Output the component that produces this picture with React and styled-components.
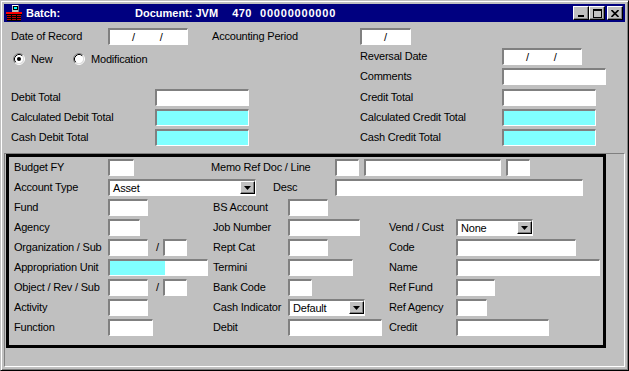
import React from 'react';
import styled, { createGlobalStyle } from 'styled-components';

const Global = createGlobalStyle`
  html, body { margin: 0; padding: 0; background: #c0c0c0; }
  body { font-family: "Liberation Sans", Arial, sans-serif; font-size: 11px; }
  #root { width: 629px; height: 371px; }
`;

const Window = styled.div`
  box-sizing: border-box;
  width: 629px;
  height: 371px;
  background: #c0c0c0;
  border: 1px solid;
  border-color: #c0c0c0 #000 #000 #c0c0c0;
  box-shadow: inset 1px 1px #fff, inset -1px -1px #808080;
  padding: 3px;
  display: flex;
  flex-direction: column;
  font-family: "Liberation Sans", Arial, sans-serif;
  font-size: 11px;
  letter-spacing: -0.2px;
  color: #000;
`;

const TitleBar = styled.div`
  flex: none;
  height: 18px;
  background: #000080;
  color: #fff;
  display: flex;
  align-items: center;
  padding: 0 2px;
  font-weight: bold;
  letter-spacing: 0;
  white-space: pre;
`;

const AppIcon = styled.svg`
  flex: none;
  margin-right: 4px;
`;

const Caption = styled.span`
  width: ${p => p.$w}px;
  flex: none;
`;

const CaptionPart = styled.span`
  margin-left: ${p => p.$ml || 0}px;
  letter-spacing: ${p => p.$ls || 0}px;
`;

const TitleButtons = styled.div`
  margin-left: auto;
  display: flex;
  align-items: center;
`;

const TitleButton = styled.div`
  box-sizing: border-box;
  width: 16px;
  height: 14px;
  margin-left: ${p => p.$ml || 0}px;
  background: #c0c0c0;
  border: 1px solid;
  border-color: #fff #000 #000 #fff;
  box-shadow: inset -1px -1px #808080;
  display: flex;
  align-items: center;
  justify-content: center;
`;

const Upper = styled.div`
  flex: none;
  height: 131px;
  box-sizing: border-box;
  padding: 6px 0 0 7px;
  display: grid;
  grid-template-columns: 97px 47px 57px 148px 142px 1fr;
  grid-template-rows: 20px 20px 21px 20px 20px 20px;
  grid-template-areas:
    "dateL dateF dateF acctL acctF ."
    "radio radio radio . revL revF"
    ". . . . comL comF"
    "debL debL debF . crL crF"
    "cdebL cdebL cdebF . ccrL ccrF"
    "kdebL kdebL kdebF . kcrL kcrF";
  align-content: start;
`;

const Label = styled.div`
  grid-area: ${p => p.$area || 'auto'};
  width: ${p => (p.$w ? `${p.$w}px` : 'auto')};
  margin-left: ${p => p.$ml || 0}px;
  flex: none;
  height: 17px;
  line-height: 17px;
  white-space: nowrap;
  align-self: start;
`;

const TextBox = styled.div`
  grid-area: ${p => p.$area || 'auto'};
  box-sizing: border-box;
  flex: none;
  width: ${p => p.$w}px;
  height: 17px;
  margin-left: ${p => p.$ml || 0}px;
  align-self: start;
  justify-self: start;
  border-style: solid;
  border-width: 2px 1px 1px 2px;
  border-color: #808080 #fff #fff #808080;
  background: #fff;
  display: flex;
  align-items: stretch;
  overflow: hidden;
`;

const Shade = styled.div`
  flex: ${p => (p.$w ? 'none' : '1')};
  width: ${p => (p.$w ? `${p.$w}px` : 'auto')};
  background: #80ffff;
`;

const DateMask = styled.div`
  display: flex;
  gap: 25px;
  padding-left: 22px;
  line-height: 14px;
`;

const Combo = styled(TextBox)`
  padding-left: 3px;
  justify-content: space-between;
  align-items: flex-start;
`;

const ComboText = styled.span`
  line-height: 14px;
`;

const DropButton = styled.span`
  box-sizing: border-box;
  width: 15px;
  height: 13px;
  background: #c0c0c0;
  border: 1px solid;
  border-color: #fff #000 #000 #fff;
  box-shadow: inset -1px -1px #808080;
  display: flex;
  align-items: center;
  justify-content: center;
`;

const RadioGroup = styled.div`
  grid-area: radio;
  display: flex;
  align-items: center;
  height: 20px;
  margin-left: 2px;
  margin-top: 1px;
`;

const RadioItem = styled.div`
  display: flex;
  align-items: center;
  gap: 6px;
  width: ${p => (p.$w ? `${p.$w}px` : 'auto')};
`;

const Lower = styled.div`
  flex: 1;
  display: flex;
  box-sizing: border-box;
  border: 1px solid;
  border-color: #808080 #fff #fff #808080;
  padding-left: 1px;
`;

const GroupBox = styled.div`
  box-sizing: border-box;
  width: 600px;
  height: 194px;
  border: 3px solid #000;
  padding: 2px 0 0 5px;
  display: flex;
  flex-direction: column;
`;

const FormRow = styled.div`
  display: flex;
  align-items: flex-start;
  height: 20px;
  flex: none;
`;

const Group = styled.div`
  display: flex;
  align-items: flex-start;
  flex: none;
  width: ${p => (p.$w ? `${p.$w}px` : 'auto')};
  margin-left: ${p => p.$ml || 0}px;
`;

const Sep = styled.span`
  flex: none;
  box-sizing: border-box;
  width: 15px;
  padding-left: 8px;
  line-height: 17px;
`;

const Icon = () => (
  <AppIcon width="16" height="16" viewBox="0 0 16 16" shapeRendering="crispEdges">
    <rect x="6" y="0" width="7" height="7" fill="#c0c0c0" />
    <rect x="6" y="0" width="7" height="1" fill="#fff" />
    <rect x="12" y="0" width="1" height="7" fill="#808080" />
    <rect x="7" y="1" width="5" height="4" fill="#000" />
    <rect x="8" y="2" width="3" height="2" fill="#00ffff" />
    <rect x="0" y="7" width="16" height="3" fill="#ff0000" />
    <rect x="0" y="9" width="16" height="1" fill="#000" />
    <rect x="1" y="10" width="14" height="6" fill="#c00000" />
    <rect x="1" y="11" width="14" height="1" fill="#000" />
    <rect x="1" y="13" width="14" height="1" fill="#000" />
    <rect x="1" y="15" width="14" height="1" fill="#000" />
    <rect x="5" y="10" width="1" height="6" fill="#000" />
    <rect x="10" y="10" width="1" height="6" fill="#000" />
  </AppIcon>
);

const Triangle = () => (
  <svg width="7" height="4" viewBox="0 0 7 4">
    <polygon points="0,0 7,0 3.5,4" fill="#000" />
  </svg>
);

const Radio = ({ checked }) => (
  <svg width="12" height="12" viewBox="0 0 12 12">
    <circle cx="6" cy="6" r="4.5" fill="#fff" />
    <path d="M2.11 9.89 A5.5 5.5 0 0 1 9.89 2.11" fill="none" stroke="#808080" />
    <path d="M9.89 2.11 A5.5 5.5 0 0 1 2.11 9.89" fill="none" stroke="#fff" />
    <path d="M2.82 9.18 A4.5 4.5 0 0 1 9.18 2.82" fill="none" stroke="#000" />
    <path d="M9.18 2.82 A4.5 4.5 0 0 1 2.82 9.18" fill="none" stroke="#dfdfdf" />
    {checked && <circle cx="6" cy="6" r="2" fill="#000" />}
  </svg>
);

const DateField = ({ area, w, parts }) => (
  <TextBox $area={area} $w={w}>
    <DateMask>
      {Array.from({ length: parts }).map((_, i) => (
        <span key={i}>/</span>
      ))}
    </DateMask>
  </TextBox>
);

const ShadedBox = ({ area, w, shadeW }) => (
  <TextBox $area={area} $w={w}>
    <Shade $w={shadeW} />
  </TextBox>
);

const Select = ({ w, value, ml }) => (
  <Combo $w={w} $ml={ml}>
    <ComboText>{value}</ComboText>
    <DropButton>
      <Triangle />
    </DropButton>
  </Combo>
);

export default function App() {
  return (
    <>
      <Global />
      <Window>
        <TitleBar>
          <Icon />
          <Caption $w={109}>Batch:</Caption>
          <CaptionPart>Document: JVM</CaptionPart>
          <CaptionPart $ml={14} $ls={0.5}>470</CaptionPart>
          <CaptionPart $ml={8} $ls={0.8}>00000000000</CaptionPart>
          <TitleButtons>
            <TitleButton>
              <svg width="8" height="8" viewBox="0 0 8 8" shapeRendering="crispEdges">
                <rect x="1" y="6" width="6" height="2" fill="#000" />
              </svg>
            </TitleButton>
            <TitleButton>
              <svg width="9" height="9" viewBox="0 0 9 9" shapeRendering="crispEdges">
                <rect x="0.5" y="0.5" width="8" height="8" fill="none" stroke="#000" />
                <rect x="0" y="1" width="9" height="1" fill="#000" />
              </svg>
            </TitleButton>
            <TitleButton $ml={2}>
              <svg width="8" height="7" viewBox="0 0 8 7">
                <path d="M0.5 0 L7.5 7 M7.5 0 L0.5 7" stroke="#000" strokeWidth="1.6" />
              </svg>
            </TitleButton>
          </TitleButtons>
        </TitleBar>

        <Upper>
          <Label $area="dateL">Date of Record</Label>
          <DateField area="dateF" w={80} parts={2} />
          <Label $area="acctL">Accounting Period</Label>
          <DateField area="acctF" w={51} parts={1} />

          <RadioGroup>
            <RadioItem $w={60}>
              <Radio checked />
              <span>New</span>
            </RadioItem>
            <RadioItem>
              <Radio />
              <span>Modification</span>
            </RadioItem>
          </RadioGroup>
          <Label $area="revL">Reversal Date</Label>
          <DateField area="revF" w={80} parts={2} />

          <Label $area="comL">Comments</Label>
          <TextBox $area="comF" $w={104} />

          <Label $area="debL">Debit Total</Label>
          <TextBox $area="debF" $w={94} />
          <Label $area="crL">Credit Total</Label>
          <TextBox $area="crF" $w={94} />

          <Label $area="cdebL">Calculated Debit Total</Label>
          <ShadedBox area="cdebF" w={94} />
          <Label $area="ccrL">Calculated Credit Total</Label>
          <ShadedBox area="ccrF" w={94} />

          <Label $area="kdebL">Cash Debit Total</Label>
          <ShadedBox area="kdebF" w={94} />
          <Label $area="kcrL">Cash Credit Total</Label>
          <ShadedBox area="kcrF" w={94} />
        </Upper>

        <Lower>
          <GroupBox>
            <FormRow>
              <Group $w={199}>
                <Label $w={94}>Budget FY</Label>
                <TextBox $w={26} />
              </Group>
              <Group $ml={-2}>
                <Label $w={124}>Memo Ref Doc / Line</Label>
                <TextBox $w={24} />
                <TextBox $w={137} $ml={5} />
                <TextBox $w={24} $ml={5} />
              </Group>
            </FormRow>

            <FormRow>
              <Group>
                <Label $w={94}>Account Type</Label>
                <Select w={148} value="Asset" />
              </Group>
              <Group $ml={17}>
                <Label $w={62}>Desc</Label>
                <TextBox $w={248} />
              </Group>
            </FormRow>

            <FormRow>
              <Group $w={199}>
                <Label $w={94}>Fund</Label>
                <TextBox $w={40} />
              </Group>
              <Group $w={176}>
                <Label $w={75}>BS Account</Label>
                <TextBox $w={40} />
              </Group>
            </FormRow>

            <FormRow>
              <Group $w={199}>
                <Label $w={94}>Agency</Label>
                <TextBox $w={32} />
              </Group>
              <Group $w={176}>
                <Label $w={75}>Job Number</Label>
                <TextBox $w={72} />
              </Group>
              <Group>
                <Label $w={67}>Vend / Cust</Label>
                <Select w={77} value="None" />
              </Group>
            </FormRow>

            <FormRow>
              <Group $w={199}>
                <Label $w={94}>Organization / Sub</Label>
                <TextBox $w={40} />
                <Sep>/</Sep>
                <TextBox $w={24} />
              </Group>
              <Group $w={176}>
                <Label $w={75}>Rept Cat</Label>
                <TextBox $w={40} />
              </Group>
              <Group>
                <Label $w={67}>Code</Label>
                <TextBox $w={120} />
              </Group>
            </FormRow>

            <FormRow>
              <Group $w={199}>
                <Label $w={94}>Appropriation Unit</Label>
                <ShadedBox w={100} shadeW={55} />
              </Group>
              <Group $w={176}>
                <Label $w={75}>Termini</Label>
                <TextBox $w={65} />
              </Group>
              <Group>
                <Label $w={67}>Name</Label>
                <TextBox $w={144} />
              </Group>
            </FormRow>

            <FormRow>
              <Group $w={199}>
                <Label $w={94}>Object / Rev / Sub</Label>
                <TextBox $w={40} />
                <Sep>/</Sep>
                <TextBox $w={24} />
              </Group>
              <Group $w={176}>
                <Label $w={75}>Bank Code</Label>
                <TextBox $w={24} />
              </Group>
              <Group>
                <Label $w={67}>Ref Fund</Label>
                <TextBox $w={39} />
              </Group>
            </FormRow>

            <FormRow>
              <Group $w={199}>
                <Label $w={94}>Activity</Label>
                <TextBox $w={40} />
              </Group>
              <Group $w={176}>
                <Label $w={75}>Cash Indicator</Label>
                <Select w={77} value="Default" />
              </Group>
              <Group>
                <Label $w={67}>Ref Agency</Label>
                <TextBox $w={31} />
              </Group>
            </FormRow>

            <FormRow>
              <Group $w={199}>
                <Label $w={94}>Function</Label>
                <TextBox $w={45} />
              </Group>
              <Group $w={176}>
                <Label $w={75}>Debit</Label>
                <TextBox $w={94} />
              </Group>
              <Group>
                <Label $w={67}>Credit</Label>
                <TextBox $w={93} />
              </Group>
            </FormRow>
          </GroupBox>
        </Lower>
      </Window>
    </>
  );
}
